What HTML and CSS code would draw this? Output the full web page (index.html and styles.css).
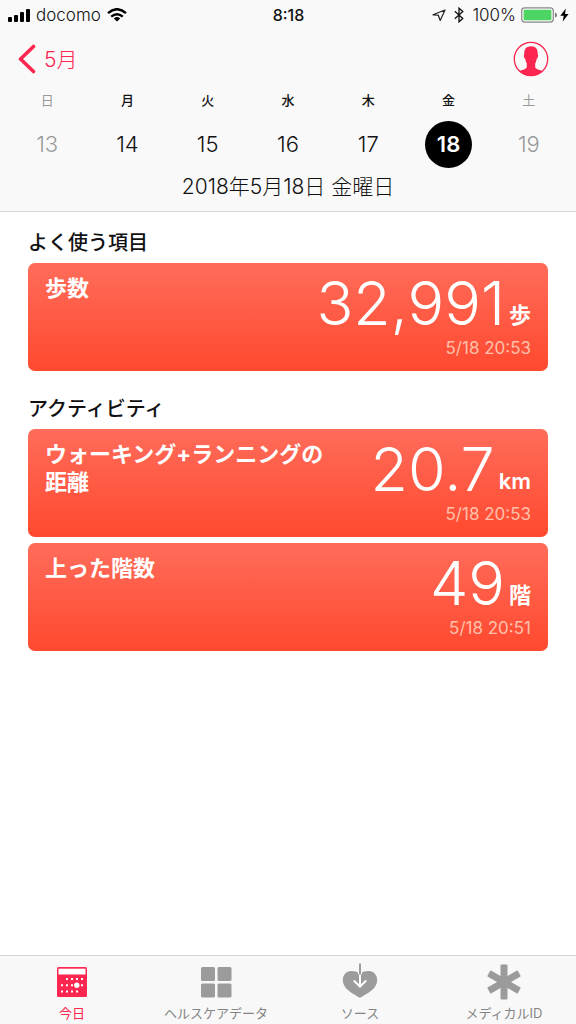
FILE: index.html
```html
<!DOCTYPE html>
<html lang="ja">
<head>
<meta charset="utf-8">
<meta name="viewport" content="width=device-width, initial-scale=1">
<title>ヘルスケア</title>
<link rel="stylesheet" href="styles.css">
</head>
<body>
<header class="header">
  <div class="status">
    <div class="status-left">
      <svg width="24" height="14" viewBox="0 0 24 14" aria-hidden="true"><rect x="0" y="9" width="4" height="5" rx="1"/><rect x="6" y="7" width="4" height="7" rx="1"/><rect x="12" y="4" width="4" height="10" rx="1"/><rect x="18" y="1" width="4" height="13" rx="1"/></svg>
      <span class="carrier">docomo</span>
      <svg class="wifi" width="20" height="14" viewBox="0 0 20 14" fill="none" stroke="#000" stroke-width="2.4" aria-hidden="true"><path d="M1 5.2Q10-2.8 19 5.2M4.2 8.7Q10 3.6 15.8 8.7"/><path d="M10 13.5L6.8 10.4Q10 7.8 13.2 10.4Z" fill="#000" stroke="none"/></svg>
    </div>
    <span class="clock">8:18</span>
    <div class="status-right">
      <svg width="14" height="14" viewBox="0 0 14 14" fill="none" stroke="#222" stroke-width="1.2" stroke-linejoin="round" aria-hidden="true"><path d="M13 2L1 6.800L6.300 7.200L8.200 12.500Z"/></svg>
      <svg width="10" height="16" viewBox="0 0 10 16" fill="none" stroke="#111" stroke-width="1.3" aria-hidden="true"><path d="M.8 4.3L8.8 11.4L5 14.8V1.2L8.8 4.6L.8 11.7"/></svg>
      <span class="percent">100%</span>
      <svg width="37" height="16" viewBox="0 0 37 16" aria-hidden="true"><rect x=".7" y=".9" width="31.6" height="14.2" rx="3" fill="none" stroke="#888" stroke-width="1.2"/><rect x="2.6" y="2.8" width="27.8" height="10.4" rx="1" fill="#4cd562"/><path d="M34 5.5Q36 6 36 8T34 10.5Z" fill="#777"/></svg>
      <svg width="9" height="14" viewBox="0 0 9 14" aria-hidden="true"><path d="M5.8.4L.3 7.7H3.7L2.7 13.6L8.6 6H5Z"/></svg>
    </div>
  </div>
  <nav class="nav">
    <a class="back" href="#"><svg width="18" height="30" viewBox="0 0 18 30" fill="none" stroke="#fc2650" stroke-width="3.6" stroke-linecap="round" stroke-linejoin="round" aria-hidden="true"><path d="M15.5 2.5L2.5 15L15.5 27.5"/></svg><span class="month">5月</span></a>
    <button class="profile" type="button" aria-label="プロフィール"><svg width="36" height="36" viewBox="0 0 36 36"><circle cx="18" cy="18" r="16.7" fill="none" stroke="#fc2650" stroke-width="1.3"/><path fill="#fc2650" d="M18 5.2C22.8 5.2 25 8.2 24.7 13C25.5 13.3 25.2 17.3 23.7 17.8C23.4 20 22.9 21.4 22.2 22.4V26.2C23.2 28.4 26.8 28.9 29.8 30C26.6 33.4 22.5 35 18 35S9.400 33.400 6.200 30C9.200 28.900 12.800 28.400 13.800 26.200V22.400C13.100 21.400 12.600 20 12.300 17.800C10.800 17.300 10.500 13.300 11.300 13C11 8.200 13.200 5.200 18 5.200Z"/></svg></button>
  </nav>
  <div class="week">
    <button class="day off" type="button"><span class="dow">日</span><span class="num">13</span></button>
    <button class="day" type="button"><span class="dow">月</span><span class="num">14</span></button>
    <button class="day" type="button"><span class="dow">火</span><span class="num">15</span></button>
    <button class="day" type="button"><span class="dow">水</span><span class="num">16</span></button>
    <button class="day" type="button"><span class="dow">木</span><span class="num">17</span></button>
    <button class="day selected" type="button" aria-pressed="true"><span class="dow">金</span><span class="num">18</span></button>
    <button class="day off" type="button"><span class="dow">土</span><span class="num">19</span></button>
  </div>
  <p class="date">2018年5月18日 金曜日</p>
</header>

<main class="main">
  <section class="section">
    <h2 class="heading">よく使う項目</h2>
    <article class="card">
      <h3 class="title">歩数</h3>
      <div class="reading"><p class="value"><span class="figure">32,991</span><span class="unit">歩</span></p><time class="time">5/18 20:53</time></div>
    </article>
  </section>
  <section class="section">
    <h2 class="heading">アクティビティ</h2>
    <article class="card">
      <h3 class="title">ウォーキング+ランニングの<br>距離</h3>
      <div class="reading"><p class="value"><span class="figure">20.7</span><span class="unit">km</span></p><time class="time">5/18 20:53</time></div>
    </article>
    <article class="card">
      <h3 class="title">上った階数</h3>
      <div class="reading"><p class="value"><span class="figure">49</span><span class="unit">階</span></p><time class="time">5/18 20:51</time></div>
    </article>
  </section>
</main>

<nav class="tabs">
  <a class="tab active" href="#" aria-current="page">
    <svg width="36" height="38" viewBox="0 0 36 38" aria-hidden="true"><rect x="3" y="4" width="30" height="30" rx="1.5" fill="#fc2650"/><g fill="#fff"><rect x="4.500" y="5.700" width="27" height="5.800"/><path d="M12 15h2v2h-2zM17 15h2v2h-2zM22 15h2v2h-2zM27 15h2v2h-2zM7 21.300h2v2H7zM12 21.300h2v2h-2zM17 21.300h2v2h-2zM27 21.300h2v2h-2zM7 27.500h2v2H7zM12 27.500h2v2h-2zM17 27.500h2v2h-2zM22 27.500h2v2h-2z"/><circle cx="22.800" cy="22.300" r="2.700"/></g></svg>
    <span>今日</span>
  </a>
  <a class="tab" href="#">
    <svg width="36" height="38" viewBox="0 0 36 38" fill="#9b9b9b" aria-hidden="true"><rect x="3" y="4" width="14" height="14" rx="1.500"/><rect x="19.500" y="4" width="14" height="14" rx="1.500"/><rect x="3" y="20.500" width="14" height="14" rx="1.500"/><rect x="19.500" y="20.500" width="14" height="14" rx="1.500"/></svg>
    <span>ヘルスケアデータ</span>
  </a>
  <a class="tab" href="#">
    <svg width="36" height="38" viewBox="0 0 36 38" aria-hidden="true"><path fill="#9b9b9b" d="M18 35C13.500 31.500.8 27 .8 17C.8 12 4.400 8 9 8C13 8 16.500 9 18 11C19.500 9 23 8 27 8C31.600 8 35.200 12 35.200 17C35.200 27 22.500 31.500 18 35Z"/><path d="M18 11V24M11.800 17.500L18 23.700L24.200 17.500" fill="none" stroke="#fff" stroke-width="2"/><path d="M16.500 8V11.500M19.500 8V11.500" stroke="#f8f8f8"/><path d="M18 .5V11.500" stroke="#9b9b9b" stroke-width="2"/></svg>
    <span>ソース</span>
  </a>
  <a class="tab" href="#">
    <svg width="36" height="38" viewBox="0 0 36 38" fill="#9b9b9b" aria-hidden="true"><rect x="14.500" y="1.500" width="7" height="35" rx="1"/><rect x="14.500" y="1.500" width="7" height="35" rx="1" transform="rotate(60 18 19)"/><rect x="14.500" y="1.500" width="7" height="35" rx="1" transform="rotate(-60 18 19)"/></svg>
    <span>メディカルID</span>
  </a>
</nav>
</body>
</html>
```
FILE: styles.css
```css
* { box-sizing: border-box; }
body {
  margin: 0;
  min-height: 100vh;
  display: flex;
  flex-direction: column;
  background: #fff;
  color: #111;
  font-family: Inter, "Noto Sans CJK JP", sans-serif;
}
h2, h3, p { margin: 0; }
a { color: inherit; text-decoration: none; }
button { border: 0; padding: 0; background: none; font: inherit; color: inherit; }
svg { display: block; flex: none; }

.header {
  background: #f9f9f9;
  border-bottom: 1px solid #d9d9d9;
}
.status {
  display: grid;
  grid-template-columns: 1fr auto 1fr;
  align-items: center;
  height: 30px;
  padding: 0 7px 0 8px;
  font-size: 16px;
}
.status-left, .status-right { display: flex; align-items: center; }
.carrier { margin-left: 4px; font-size: 17px; font-weight: 300; }
.wifi { margin-left: 6px; }
.clock { font-weight: 500; }
.status-right { justify-content: flex-end; }
.status-right svg { margin-left: 2px; }
.status-right svg + svg:not(:last-child) { margin-left: 8px; }
.percent { margin: 0 3px 0 8px; font-weight: 300; font-size: 17px; }

.nav {
  display: flex;
  justify-content: space-between;
  align-items: center;
  height: 58px;
  padding: 0 27px 0 18px;
}
.back {
  display: flex;
  align-items: center;
  gap: 8px;
  color: #fc2650;
  font-size: 21px;
  font-weight: 300;
}
.month { padding-bottom: 3px; }
.week {
  display: grid;
  grid-template-columns: repeat(7, 1fr);
  padding: 0 7px;
}
.day { display: flex; flex-direction: column; align-items: center; }
.dow { height: 33px; line-height: 24px; font-size: 13px; font-weight: 500; }
.num {
  width: 47px;
  border-radius: 50%;
  line-height: 47px;
  font-size: 22px;
  font-weight: 300;
}
.off { color: #999; }
.off .dow { font-weight: 400; }
.selected .num { background: #000; color: #fff; font-weight: 600; }
.date {
  height: 43px;
  line-height: 38px;
  text-align: center;
  font-size: 21px;
  font-weight: 300;
}

.main { flex: 1; padding: 0 28px; }
.section { display: flex; flex-direction: column; gap: 6px; }
.section + .section { margin-top: 7px; }
.heading {
  height: 45px;
  padding-top: 16px;
  line-height: 30px;
  font-size: 20px;
  font-weight: 500;
}
.card {
  display: flex;
  justify-content: space-between;
  min-height: 108px;
  padding: 11px 17px 12px;
  border-radius: 7px;
  background: linear-gradient(#ff6c5a, #ff492f);
  color: #fff;
}
.title { line-height: 28px; font-size: 22px; font-weight: 700; }
.reading { display: flex; flex-direction: column; align-items: flex-end; }
.value {
  display: flex;
  align-items: flex-end;
  gap: 4px;
  height: 63px;
  white-space: nowrap;
}
.figure { line-height: 68px; font-size: 61px; font-weight: 300; }
.unit { line-height: 44px; font-size: 22px; font-weight: 600; }
.time { line-height: 22px; font-size: 17px; color: #ffc0ab; }

.tabs {
  display: grid;
  grid-template-columns: repeat(4, 1fr);
  border-top: 1px solid #d4d4d4;
  background: #f8f8f8;
  color: #858585;
}
.tab {
  display: flex;
  flex-direction: column;
  align-items: center;
  gap: 2px;
  padding-top: 7px;
  font-size: 13px;
  line-height: 21px;
}
.active { color: #fc2650; }
```
